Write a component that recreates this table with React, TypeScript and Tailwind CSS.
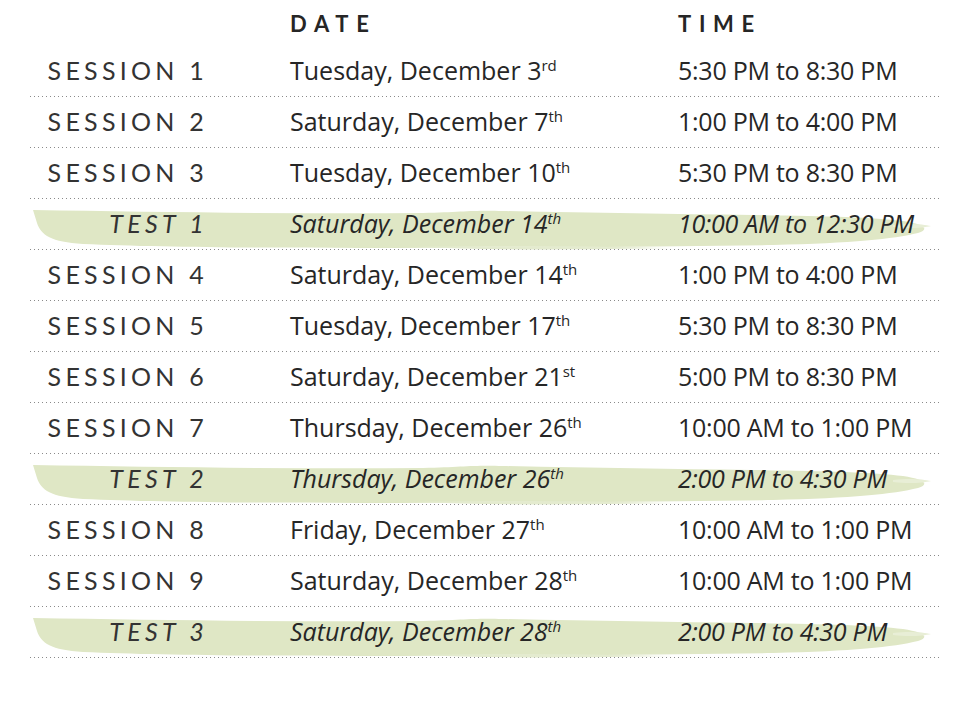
import React from 'react';

type Row = {
  label: string;
  day: string;
  num: string;
  suf: string;
  time: string;
  test?: boolean;
};

const rows: Row[] = [
  { label: 'SESSION 1', day: 'Tuesday, December', num: '3', suf: 'rd', time: '5:30 PM to 8:30 PM' },
  { label: 'SESSION 2', day: 'Saturday, December', num: '7', suf: 'th', time: '1:00 PM to 4:00 PM' },
  { label: 'SESSION 3', day: 'Tuesday, December', num: '10', suf: 'th', time: '5:30 PM to 8:30 PM' },
  { label: 'TEST 1', day: 'Saturday, December', num: '14', suf: 'th', time: '10:00 AM to 12:30 PM', test: true },
  { label: 'SESSION 4', day: 'Saturday, December', num: '14', suf: 'th', time: '1:00 PM to 4:00 PM' },
  { label: 'SESSION 5', day: 'Tuesday, December', num: '17', suf: 'th', time: '5:30 PM to 8:30 PM' },
  { label: 'SESSION 6', day: 'Saturday, December', num: '21', suf: 'st', time: '5:00 PM to 8:30 PM' },
  { label: 'SESSION 7', day: 'Thursday, December', num: '26', suf: 'th', time: '10:00 AM to 1:00 PM' },
  { label: 'TEST 2', day: 'Thursday, December', num: '26', suf: 'th', time: '2:00 PM to 4:30 PM', test: true },
  { label: 'SESSION 8', day: 'Friday, December', num: '27', suf: 'th', time: '10:00 AM to 1:00 PM' },
  { label: 'SESSION 9', day: 'Saturday, December', num: '28', suf: 'th', time: '10:00 AM to 1:00 PM' },
  { label: 'TEST 3', day: 'Saturday, December', num: '28', suf: 'th', time: '2:00 PM to 4:30 PM', test: true },
];

// painted highlight behind the test rows
function Brush() {
  return (
    <svg className="absolute left-[3px] top-[10px] w-[900px] h-[42px]" viewBox="0 0 900 42" preserveAspectRatio="none">
      <path
        d="M0 1 C120 3 260 5 390 4 C430 3 440 1 470 2 C560 4 640 5 720 6 C790 7 840 8 870 12 C890 15 898 20 885 24 C860 30 820 34 740 36 C600 38 460 39 330 39 C220 39 120 38 50 35 C18 33 8 26 4 14 Z"
        fill="#dfe7c5"
      />
      <path d="M380 38 C460 36 560 37 640 39 C540 41 460 41 380 38 Z" fill="#e4ebcf" />
      <path d="M860 16 C875 14 890 15 898 17 C890 19 875 20 860 18 Z" fill="#e8eed6" />
    </svg>
  );
}

function Dots() {
  return <div className="h-px w-full bg-[linear-gradient(to_right,#8a8a8a_1px,transparent_1px)] bg-[length:4px_1px]" />;
}

export default function App() {
  return (
    <div className="w-[958px] h-[716px] bg-white pl-[30px] pr-[18px] text-[#262626]">
      <div className="flex h-[46px] items-center font-['Lato',sans-serif] text-[22px] font-bold tracking-[0.35em]">
        <div className="w-[260px]" />
        <div className="w-[388px]">DATE</div>
        <div>TIME</div>
      </div>
      {rows.map((r, i) => (
        <div key={i}>
          <div className="relative flex h-[50px] items-center">
            {r.test && <Brush />}
            <div
              className={`relative w-[178px] text-right font-['Lato',sans-serif] text-[25px] tracking-[0.17em] text-[#333333] ${r.test ? 'italic' : ''}`}
            >
              {r.label}
            </div>
            <div className={`relative ml-[82px] w-[388px] font-['Open_Sans',sans-serif] text-[25px] ${r.test ? 'italic' : ''}`}>
              {r.day} {r.num}
              <sup className="text-[15px] top-[-0.65em]">{r.suf}</sup>
            </div>
            <div className={`relative font-['Open_Sans',sans-serif] text-[25px] tracking-[-0.01em] ${r.test ? 'italic' : ''}`}>{r.time}</div>
          </div>
          <Dots />
        </div>
      ))}
    </div>
  );
}
